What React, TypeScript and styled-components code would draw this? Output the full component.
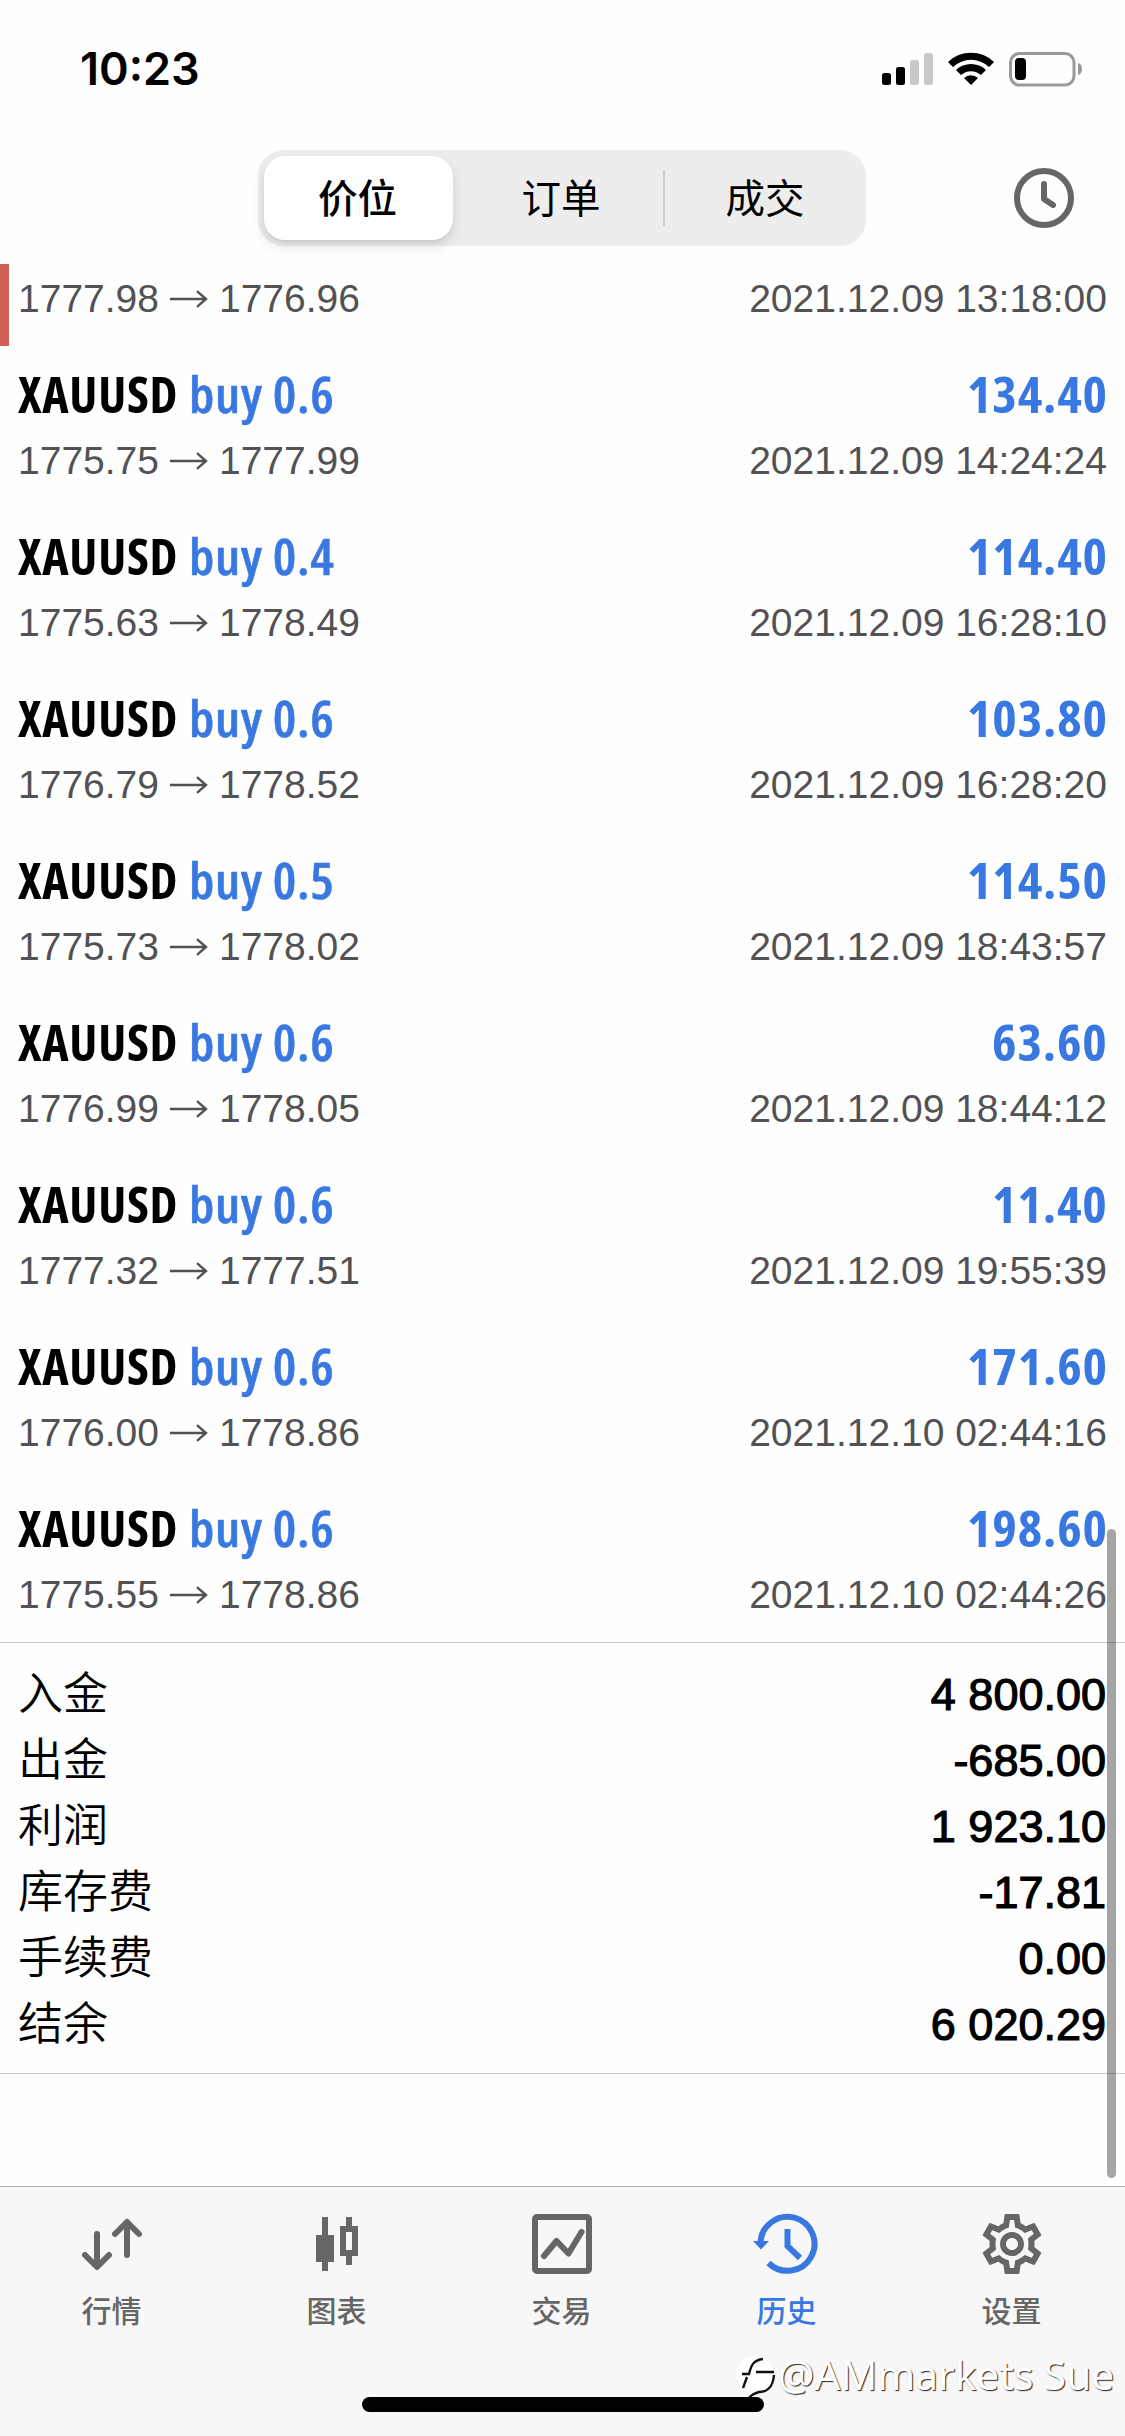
import React from "react";
import styled, { createGlobalStyle } from "styled-components";
import { MdOutlineSettings } from "react-icons/md";

const CJK = '"Noto Sans CJK SC", sans-serif';
const HELV = '"Liberation Sans", Arial, sans-serif';
const BLUE = "#3a78e1";
const GRAY = "#666666";

const Global = createGlobalStyle`
  * { box-sizing: border-box; }
  body { margin: 0; background: #fefefe; }
`;

const Screen = styled.div`
  position: relative;
  display: flex;
  flex-direction: column;
  width: 1125px;
  height: 2436px;
  overflow: hidden;
  background: #fefefe;
  color: #000;
  font-family: ${HELV};
`;

const StatusBar = styled.header`
  display: flex;
  justify-content: space-between;
  align-items: center;
  height: 138px;
  padding: 0 42px 0 80px;
`;

const Time = styled.div`
  font: 600 45px/60px Inter, sans-serif;
`;

const StatusIcons = styled.div`
  display: flex;
  align-items: center;
`;

const NavBar = styled.nav`
  display: grid;
  grid-template-columns: 258px 608px 1fr;
  align-items: center;
  height: 126px;
  padding: 0 51px 7px 0;
`;

const Segments = styled.div`
  grid-column: 2;
  display: grid;
  grid-template-columns: 189px 211px 202px;
  height: 96px;
  padding: 6px 0 6px 6px;
  border-radius: 26px;
  background: #ededed;
`;

const Segment = styled.div<{ $active?: boolean; $divider?: boolean }>`
  display: flex;
  justify-content: center;
  align-items: center;
  position: relative;
  padding: 0 ${(p) => (p.$active ? 2 : 0)}px 4px ${(p) => (p.$divider ? 5 : 0)}px;
  border-radius: 21px;
  background: ${(p) => (p.$active ? "#fff" : "transparent")};
  box-shadow: ${(p) => (p.$active ? "0 6px 14px rgba(0,0,0,.12), 0 2px 3px rgba(0,0,0,.05)" : "none")};
  font: ${(p) => (p.$active ? 500 : 400)} 39.5px/48px ${CJK};
  &::after {
    content: "";
    display: ${(p) => (p.$divider ? "block" : "none")};
    position: absolute;
    right: -1px;
    top: 14px;
    width: 2px;
    height: 56px;
    background: #d0d0d2;
  }
`;

const ClockButton = styled.div`
  justify-self: end;
  display: flex;
`;

const List = styled.main`
  display: flex;
  flex-direction: column;
`;

const Row = styled.article<{ $clipped?: boolean }>`
  height: ${(p) => (p.$clipped ? 82 : 162)}px;
  padding: ${(p) => (p.$clipped ? "5px 18px 0 9px" : "18px 18px 0 18px")};
  border-left: ${(p) => (p.$clipped ? "9px solid #cf6157" : "none")};
`;

const Line = styled.div<{ $head?: boolean }>`
  display: flex;
  justify-content: space-between;
  height: 60px;
  margin-bottom: ${(p) => (p.$head ? 7 : 0)}px;
  font-size: 39px;
  line-height: 60px;
  color: #525254;
  white-space: pre;
`;

const Deal = styled.div`
  display: flex;
`;

const Condensed = styled.span`
  font: 700 50px/60px "Open Sans", sans-serif;
  font-stretch: 75%;
`;

const Symbol = styled(Condensed)`
  width: 171px;
  letter-spacing: 0.7px;
  color: #000;
`;

const Volume = styled(Condensed)`
  font-weight: 600;
  letter-spacing: 0.6px;
  transform: scaleX(1.055);
  transform-origin: left center;
  -webkit-text-stroke: 0.5px ${BLUE};
  color: ${BLUE};
`;

const Profit = styled(Condensed)`
  letter-spacing: 0.8px;
  margin-right: -1px;
  transform: scaleX(1.045);
  transform-origin: right center;
  color: ${BLUE};
`;

const Prices = styled.div`
  display: flex;
  align-items: center;
`;

const ArrowCell = styled.span`
  display: flex;
  justify-content: center;
  width: 60px;
`;

const Summary = styled.section`
  height: 432px;
  padding: 17px 19px 0 18px;
  border-top: 1px solid #c8c8ca;
  border-bottom: 1px solid #c8c8ca;
`;

const SummaryRow = styled.div`
  display: flex;
  justify-content: space-between;
  height: 66px;
`;

const SummaryLabel = styled.span`
  font: 350 45px/61px ${CJK};
`;

const SummaryValue = styled.span`
  font-size: 45px;
  line-height: 70px;
  -webkit-text-stroke: 1.2px #000;
`;

const ScrollThumb = styled.div`
  position: absolute;
  left: 1107px;
  top: 1529px;
  width: 9px;
  height: 649px;
  border-radius: 5px;
  background: rgba(0, 0, 0, 0.35);
`;

const TabBar = styled.footer`
  display: grid;
  grid-template-columns: repeat(5, 225px);
  align-content: start;
  margin-top: auto;
  height: 250px;
  padding-top: 21px;
  border-top: 1px solid #b0b0b0;
  background: #f7f7f7;
`;

const Tab = styled.div<{ $active?: boolean }>`
  display: flex;
  flex-direction: column;
  align-items: center;
  padding-right: 2px;
  color: ${(p) => (p.$active ? BLUE : GRAY)};
  font: 500 30px/44px ${CJK};
  svg { display: block; margin-bottom: 7px; }
`;

const HomeIndicator = styled.div`
  position: absolute;
  left: 362px;
  top: 2397px;
  width: 402px;
  height: 15px;
  border-radius: 8px;
  background: #000;
`;

const Watermark = styled.div`
  position: absolute;
  left: 734px;
  top: 2350px;
  display: flex;
  align-items: center;
  font: 400 40.6px/50px "Noto Sans", sans-serif;
  color: #fff;
  white-space: pre;
  text-shadow: 1px 1px 1px #222;
`;

const deals = [
  ["0.6", "134.40", "1775.75", "1777.99", "2021.12.09 14:24:24"],
  ["0.4", "114.40", "1775.63", "1778.49", "2021.12.09 16:28:10"],
  ["0.6", "103.80", "1776.79", "1778.52", "2021.12.09 16:28:20"],
  ["0.5", "114.50", "1775.73", "1778.02", "2021.12.09 18:43:57"],
  ["0.6", "63.60", "1776.99", "1778.05", "2021.12.09 18:44:12"],
  ["0.6", "11.40", "1777.32", "1777.51", "2021.12.09 19:55:39"],
  ["0.6", "171.60", "1776.00", "1778.86", "2021.12.10 02:44:16"],
  ["0.6", "198.60", "1775.55", "1778.86", "2021.12.10 02:44:26"],
];

const totals = [
  ["入金", "4 800.00"],
  ["出金", "-685.00"],
  ["利润", "1 923.10"],
  ["库存费", "-17.81"],
  ["手续费", "0.00"],
  ["结余", "6 020.29"],
];

const Detail = ({ from, to, at }: { from: string; to: string; at: string }) => (
  <Line>
    <Prices>
      {from}
      <ArrowCell>
        <svg width="38" height="18" viewBox="0 0 38 18" fill="none" stroke="#525254" strokeWidth="2.4">
          <path d="M0 9H36M27 1.2L36 9L27 16.8" />
        </svg>
      </ArrowCell>
      {to}
    </Prices>
    <span>{at}</span>
  </Line>
);

const tabs = [
  {
    label: "行情",
    icon: (
      <g fill="none" stroke="currentColor" strokeWidth="6" strokeLinecap="round" strokeLinejoin="round">
        <path d="M21 28V60M9 49L21 61L33 49" />
        <path d="M51 49V16M39 28L51 16L63 28" />
      </g>
    ),
  },
  {
    label: "图表",
    icon: (
      <g fill="currentColor">
        <path d="M21 11H27V29H33V56H27V65H21V56H15V29H21Z" />
        <path fillRule="evenodd" d="M45 11H51V20H57V50H51V59H45V50H39V20H45ZM45 26V44H51V26Z" />
      </g>
    ),
  },
  {
    label: "交易",
    icon: (
      <g fill="none" stroke="currentColor" strokeWidth="6" strokeLinecap="round" strokeLinejoin="round">
        <rect x="9" y="11" width="54" height="54" rx="2" />
        <path d="M18 50L30.5 35L42.5 47.5L55.5 26" />
      </g>
    ),
  },
  {
    label: "历史",
    icon: (
      <g fill="none" stroke="currentColor" strokeWidth="6">
        <path d="M9.5 38A27 27 0 1 1 17.5 57" />
        <path d="M36.5 23V40L49 52" />
        <path d="M2 35H18L10 43.5Z" fill="currentColor" stroke="none" />
      </g>
    ),
  },
];

export default function App() {
  return (
    <Screen>
      <Global />
      <StatusBar>
        <Time>10:23</Time>
        <StatusIcons>
          <svg width="202" height="36" viewBox="881 51 202 36">
            <rect x="882" y="73" width="9" height="12" rx="2.5" />
            <rect x="896" y="67" width="9" height="18" rx="2.5" />
            <rect x="910" y="60" width="9" height="25" rx="2.5" fill="#c8c8c8" />
            <rect x="924" y="53" width="9" height="32" rx="2.5" fill="#c8c8c8" />
            <path d="M948 62A33 33 0 0 1 994 62L989 67A26 26 0 0 0 953 67Z" />
            <path d="M956 70A22 22 0 0 1 986 70L981 75A15 15 0 0 0 961 75Z" />
            <path d="M964 78A10.5 10.5 0 0 1 978 78L971 85Z" />
            <rect x="1010.5" y="53.5" width="63.5" height="31.5" rx="9" fill="none" stroke="#999" strokeWidth="3" />
            <rect x="1015" y="58" width="11" height="22" rx="4" />
            <path d="M1078 63Q1082 64 1082 69Q1082 74 1078 75Z" fill="#999" />
          </svg>
        </StatusIcons>
      </StatusBar>
      <NavBar>
        <Segments>
          <Segment $active>价位</Segment>
          <Segment $divider>订单</Segment>
          <Segment>成交</Segment>
        </Segments>
        <ClockButton>
          <svg width="60" height="60" viewBox="0 0 60 60" fill="none" stroke={GRAY} strokeWidth="6">
            <circle cx="30" cy="30" r="27" />
            <path d="M30 16V31L39 37" strokeLinecap="round" strokeLinejoin="round" />
          </svg>
        </ClockButton>
      </NavBar>
      <List>
        <Row $clipped>
          <Detail from="1777.98" to="1776.96" at="2021.12.09 13:18:00" />
        </Row>
        {deals.map(([lot, profit, from, to, at]) => (
          <Row key={at}>
            <Line $head>
              <Deal>
                <Symbol>XAUUSD</Symbol>
                <Volume>{`buy ${lot}`}</Volume>
              </Deal>
              <Profit>{profit}</Profit>
            </Line>
            <Detail from={from} to={to} at={at} />
          </Row>
        ))}
      </List>
      <Summary>
        {totals.map(([label, value]) => (
          <SummaryRow key={label}>
            <SummaryLabel>{label}</SummaryLabel>
            <SummaryValue>{value}</SummaryValue>
          </SummaryRow>
        ))}
      </Summary>
      <TabBar>
        {tabs.map((t) => (
          <Tab key={t.label} $active={t.label === "历史"}>
            <svg width="72" height="72" viewBox="0 2 72 72">{t.icon}</svg>
            {t.label}
          </Tab>
        ))}
        <Tab>
          <MdOutlineSettings size={72} />
          设置
        </Tab>
      </TabBar>
      <HomeIndicator />
      <ScrollThumb />
      <Watermark>
        <svg width="44" height="46" viewBox="0 0 44 46" fill="none">
          <path d="M20 4C31 4 40 12 40 23C40 34 31 39 22 39L15 45L17 38C8 36 2 30 2 22C2 12 10 4 20 4Z" fill="#fff" />
          <path d="M8 22H15C17 14 19 8 29 7M22 20H40M13 25L9 36M40 23C39 36 32 40 25 40Q18 42 15 46" stroke="#111" strokeWidth="2.4" />
        </svg>
        @AMmarkets Sue
      </Watermark>
    </Screen>
  );
}
